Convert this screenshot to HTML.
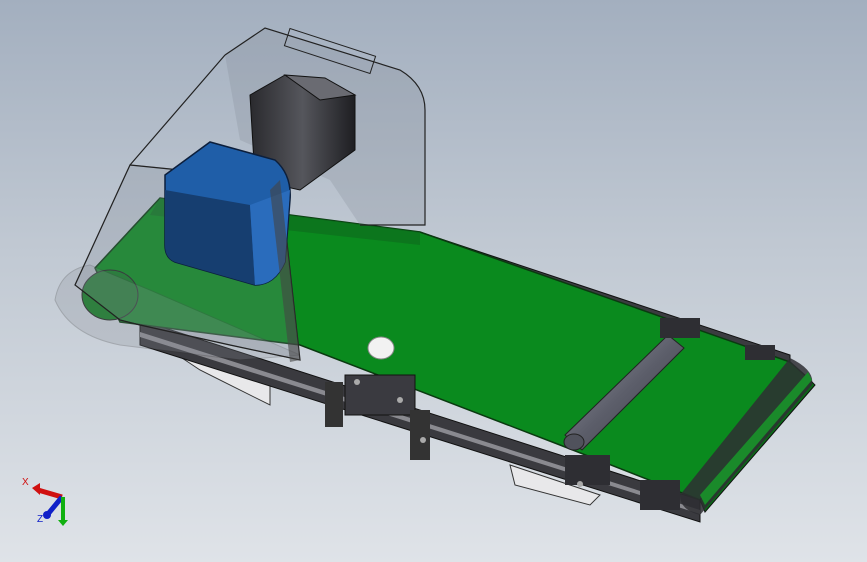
<!DOCTYPE html>
<html><head><meta charset="utf-8"><style>
html,body{margin:0;padding:0;width:867px;height:562px;overflow:hidden}
body{background:linear-gradient(180deg,#a3afbf 0%,#c1c9d3 45%,#dfe3e8 100%);font-family:"Liberation Sans",sans-serif}
</style></head><body>
<svg width="867" height="562" viewBox="0 0 867 562" xmlns="http://www.w3.org/2000/svg">
<defs>
<linearGradient id="mot" x1="0" y1="0" x2="1" y2="0"><stop offset="0" stop-color="#2a2a2e"/><stop offset=".5" stop-color="#55565c"/><stop offset="1" stop-color="#1e1e22"/></linearGradient>
<linearGradient id="rol" x1="0" y1="0" x2="1" y2="1"><stop offset="0" stop-color="#9a9ca8"/><stop offset=".5" stop-color="#5c5e6a"/><stop offset="1" stop-color="#3a3b44"/></linearGradient>
</defs>
<polygon points="170,350 270,380 270,405 200,370" fill="#e8e8ea" stroke="#333" stroke-width="1"/>
<polygon points="510,465 600,495 590,505 515,485" fill="#e8e8ea" stroke="#333" stroke-width="1"/>
<polygon points="140,320 700,500 700,522 140,345" fill="#3a3a3f" stroke="#111" stroke-width="1"/>
<polygon points="140,332 700,510 700,514 140,337" fill="#8a8a90"/>
<polygon points="420,232 790,355 790,368 420,246" fill="#3b3b40" stroke="#111"/>
<polygon points="95,268 160,198 420,232 790,362 808,378 700,500 560,445 300,345 120,322" fill="#0a8a1e" stroke="#0a3a10" stroke-width="1.5"/>
<polygon points="160,198 420,232 420,245 150,215" fill="#0d6e1c" opacity=".7"/>
<polygon points="700,500 808,378 815,385 705,512" fill="#0a6a16" stroke="#111"/>
<path d="M790,358 Q815,370 812,385 L700,515 Q680,510 680,495 Z" fill="#2e2e33" opacity=".85"/>
<polygon points="700,495 808,372 812,380 705,505" fill="#1a8a2a"/>
<polygon points="565,435 668,335 684,348 582,450" fill="url(#rol)" stroke="#222"/>
<ellipse cx="574" cy="442" rx="10" ry="8" fill="#50525c" stroke="#222"/>
<ellipse cx="381" cy="348" rx="13" ry="11" fill="#f2f2f2" stroke="#888"/>
<ellipse cx="110" cy="295" rx="28" ry="25" fill="#117a22" stroke="#222"/>
<path d="M55,300 Q60,270 90,265 L150,290 L300,355 L240,360 L120,345 Q70,335 55,300 Z" fill="#8a8f98" opacity=".25" stroke="#333"/>
<polygon points="130,165 280,180 300,360 230,345 140,325 120,320 75,285" fill="#7e8794" opacity=".25" stroke="#222" stroke-width="1.2"/>
<polygon points="130,165 280,180 300,360 230,345 140,325 120,320 75,285" fill="none" stroke="#222" stroke-width="1.2"/>
<path d="M225,55 L265,28 L400,70 Q425,85 425,110 L425,225 L360,225 L330,180 L240,140 Z" fill="#7e8794" opacity=".25"/>
<path d="M225,55 L265,28 L400,70 Q425,85 425,110 L425,225 L360,225 M225,55 L130,165" fill="none" stroke="#222" stroke-width="1.2"/>
<rect x="285" y="42" width="90" height="18" fill="none" stroke="#222" transform="rotate(18 330 51)"/>
<polygon points="250,95 285,75 355,95 355,150 300,190 255,180" fill="url(#mot)" stroke="#111"/>
<polygon points="285,75 325,78 355,95 320,100" fill="#6a6b72" stroke="#111"/>
<path d="M165,175 L210,142 L275,160 Q292,175 290,200 L285,262 Q275,285 255,285 L175,262 Q165,258 165,245 Z" fill="#1f5ea8" stroke="#0c1f3c" stroke-width="1.5"/>
<path d="M165,190 L250,205 L255,285 L175,262 Q165,258 165,245 Z" fill="#163e70"/>
<path d="M250,205 L290,190 L285,262 Q275,285 255,285 Z" fill="#2a6cbc"/>
<polygon points="280,180 300,360 290,362 270,190" fill="#444" opacity=".6"/>
<rect x="325" y="382" width="18" height="45" fill="#333"/>
<rect x="345" y="375" width="70" height="40" fill="#3a3a40" stroke="#111"/>
<rect x="410" y="410" width="20" height="50" fill="#333"/>
<rect x="565" y="455" width="45" height="30" fill="#2e2e33"/>
<rect x="640" y="480" width="40" height="30" fill="#2e2e33"/>
<rect x="660" y="318" width="40" height="20" fill="#2e2e33"/>
<rect x="745" y="345" width="30" height="15" fill="#2e2e33"/>
<circle cx="357" cy="382" r="3" fill="#aaa"/><circle cx="400" cy="400" r="3" fill="#aaa"/><circle cx="423" cy="440" r="3" fill="#aaa"/><circle cx="580" cy="484" r="3" fill="#aaa"/>
<line x1="62" y1="497" x2="38" y2="490" stroke="#d01010" stroke-width="5"/>
<polygon points="32,488 40,483 40,495" fill="#d01010"/>
<line x1="62" y1="497" x2="48" y2="514" stroke="#1020c8" stroke-width="5"/>
<circle cx="47" cy="515" r="4" fill="#1020c8"/>
<line x1="63" y1="497" x2="63" y2="520" stroke="#10b010" stroke-width="4"/>
<polygon points="58,520 68,520 63,526" fill="#10b010"/>
<text x="22" y="485" font-size="10" fill="#d01010">X</text>
<text x="37" y="522" font-size="10" fill="#1020c8">Z</text>
</svg>
</body></html>
